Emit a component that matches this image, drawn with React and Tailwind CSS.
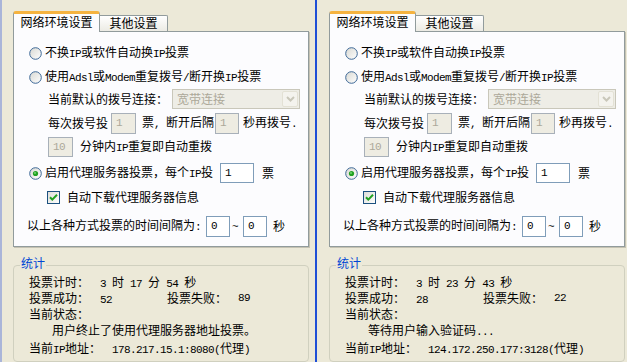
import React from "react";

// half-width text, 6px per glyph like the bitmap SimSun ASCII
const M = ({ children }) => (
  <span className="font-['Liberation_Mono',monospace] text-[11px] tracking-[-0.6px]">{children}</span>
);

const Radio = ({ checked }) => (
  <svg width="13" height="13" viewBox="0 0 13 13" className="shrink-0">
    <defs>
      <linearGradient id="rg" x1="0" y1="0" x2="1" y2="1">
        <stop offset="0" stopColor="#D8D8D2" />
        <stop offset="1" stopColor="#FFFFFF" />
      </linearGradient>
    </defs>
    <circle cx="6.5" cy="6.5" r="5.8" fill="url(#rg)" stroke="#3D6897" strokeWidth="1" />
    {checked && (
      <>
        <circle cx="6.5" cy="6.5" r="2.6" fill="#21A121" />
        <circle cx="6" cy="6" r="1" fill="#6FD66F" />
      </>
    )}
  </svg>
);

const Check = () => (
  <svg width="13" height="13" viewBox="0 0 13 13" className="shrink-0">
    <defs>
      <linearGradient id="cg" x1="0" y1="0" x2="1" y2="1">
        <stop offset="0" stopColor="#DCDCD7" />
        <stop offset="1" stopColor="#FFFFFF" />
      </linearGradient>
    </defs>
    <rect x="0.5" y="0.5" width="12" height="12" fill="url(#cg)" stroke="#1C5180" />
    <path d="M3 6.2 L5.3 8.6 L10 3.8" fill="none" stroke="#21A121" strokeWidth="2" />
  </svg>
);

const Box = ({ w, h = 21, value, disabled }) => (
  <div
    className={`shrink-0 border flex items-center pl-[4px] ${
      disabled ? "bg-[#EEECE2] border-[#A8B0B9] text-[#ACA899]" : "bg-white border-[#7F9DB9] text-black"
    }`}
    style={{ width: w, height: h }}
  >
    <M>{value}</M>
  </div>
);

const Pane = ({ s }) => (
  <div className="w-[296px]">
    {/* tabs */}
    <div className="h-[32px] -mb-[1px] flex items-end relative z-10">
      <div className="w-[87px] h-[21px] bg-[#FCFCFE] border-x border-[#919B9C] border-t-[3px] border-t-[#F5B340] rounded-t-[3px] flex justify-center">
        网络环境设置
      </div>
      <div className="w-[68px] h-[16px] mb-[1px] bg-gradient-to-b from-white to-[#ECEBE4] border-t border-r border-[#919B9C] rounded-tr-[2px] flex justify-center">
        <span className="leading-[14px]">其他设置</span>
      </div>
    </div>

    {/* tab body */}
    <div className="h-[216px] border border-[#919B9C] bg-[#FCFCFE] shadow-[1px_1px_0_#C5C2B2] flex flex-col pt-[9px] whitespace-pre">
      <div className="h-[24px] flex items-center pl-[15px] gap-[3px]">
        <Radio />
        <span>
          不换<M>IP</M>或软件自动换<M>IP</M>投票
        </span>
      </div>
      <div className="h-[24px] flex items-center pl-[15px] gap-[3px]">
        <Radio />
        <span>
          使用<M>Adsl</M>或<M>Modem</M>重复拨号<M>/</M>断开换<M>IP</M>投票
        </span>
      </div>
      <div className="h-[20px] flex items-center pl-[34px]">
        <span>当前默认的拨号连接：</span>
        <div className="ml-[4px] w-[128px] h-[20px] border border-[#C9C7BA] bg-[#EEEDE6] flex items-center justify-between pl-[4px] pr-[1px]">
          <span className="text-[#ACA899]">宽带连接</span>
          <div className="w-[16px] h-[16px] rounded-[2px] border border-[#E3E1D5] bg-[#F4F3EE] flex items-center justify-center">
            <svg width="9" height="6" viewBox="0 0 9 6">
              <path d="M1 1 L4.5 4.5 L8 1" fill="none" stroke="#C9C7BA" strokeWidth="2" />
            </svg>
          </div>
        </div>
      </div>
      <div className="h-[28px] flex items-center pl-[34px]">
        <span>每次拨号投</span>
        <div className="ml-[3px]">
          <Box w={25} value="1" disabled />
        </div>
        <span className="ml-[6px]">
          票<M>, </M>断开后隔
        </span>
        <div className="ml-[1px]">
          <Box w={24} value="1" disabled />
        </div>
        <span className="ml-[4px]">
          秒再拨号<M>.</M>
        </span>
      </div>
      <div className="h-[20px] flex items-center pl-[34px]">
        <Box w={25} h={20} value="10" disabled />
        <span className="ml-[7px]">
          分钟内<M>IP</M>重复即自动重拨
        </span>
      </div>
      <div className="h-[32px] flex items-center pl-[15px]">
        <Radio checked />
        <span className="ml-[3px]">
          启用代理服务器投票，每个<M>IP</M>投
        </span>
        <div className="ml-[7px]">
          <Box w={34} h={20} value="1" />
        </div>
        <span className="ml-[8px]">票</span>
      </div>
      <div className="h-[16px] flex items-center pl-[33px]">
        <Check />
        <span className="ml-[7px]">自动下载代理服务器信息</span>
      </div>
      <div className="mt-[11px] h-[20px] flex items-center pl-[13px]">
        <span>
          以上各种方式投票的时间间隔为<M>:</M>
        </span>
        <div className="ml-[5px]">
          <Box w={24} value="0" />
        </div>
        <span className="ml-[2px]">
          <M>~</M>
        </span>
        <div className="ml-[5px]">
          <Box w={24} value="0" />
        </div>
        <span className="ml-[6px]">秒</span>
      </div>
    </div>

    {/* stats group */}
    <div className="relative mt-[18px] h-[97px] border border-[#D0D0BF] rounded-[4px] pt-[8px] pl-[15px] whitespace-pre">
      <span className="absolute -top-[11px] left-[6px] px-[1px] bg-[#ECE9D8] text-[#0046D5]">统计</span>
      <div className="h-[16px] flex">
        <span className="w-[71px]">投票计时：</span>
        <span>
          <M>{s.h} </M>时<M> {s.m} </M>分<M> {s.sec} </M>秒
        </span>
      </div>
      <div className="h-[16px] flex">
        <span className="w-[71px]">投票成功：</span>
        <span className="w-[67px]">
          <M>{s.ok}</M>
        </span>
        <span className="w-[71px]">投票失败：</span>
        <M>{s.fail}</M>
      </div>
      <div className="h-[16px]">当前状态：</div>
      <div className="h-[16px] pl-[23px]">{s.status}</div>
      <div className="h-[16px] mt-[2px] flex">
        <span className="w-[83px]">
          当前<M>IP</M>地址：
        </span>
        <span>
          <M>{s.ip}(</M>代理<M>)</M>
        </span>
      </div>
    </div>
  </div>
);

const left = {
  h: "3",
  m: "17",
  sec: "54",
  ok: "52",
  fail: "89",
  status: <>用户终止了使用代理服务器地址投票。</>,
  ip: "178.217.15.1:8080",
};

const right = {
  h: "3",
  m: "23",
  sec: "43",
  ok: "28",
  fail: "22",
  status: (
    <>
      等待用户输入验证码<M>...</M>
    </>
  ),
  ip: "124.172.250.177:3128",
};

export default function App() {
  return (
    <div className="w-[627px] h-[362px] overflow-hidden bg-[#ECE9D8] flex font-['Noto_Sans_CJK_SC',sans-serif] text-[12px] leading-[16px] text-black">
      <div className="w-[315px] shrink-0 border-l-2 border-[#AAB5D9] pl-[11px]">
        <Pane s={left} />
      </div>
      <div className="w-[2px] shrink-0 bg-[#1F4FD6]" />
      <div className="w-[310px] shrink-0 pl-[12px]">
        <Pane s={right} />
      </div>
    </div>
  );
}
